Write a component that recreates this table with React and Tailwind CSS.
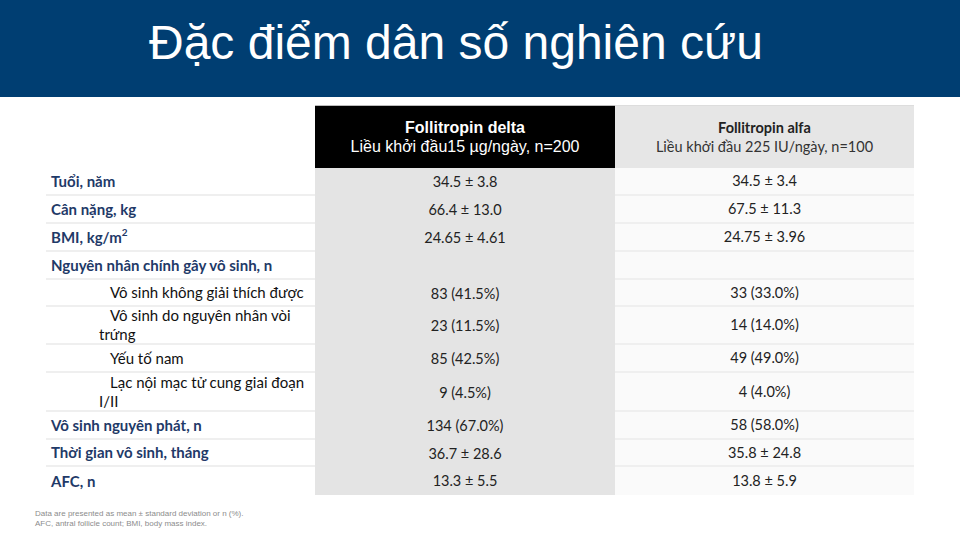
import React from "react";

const rows = [
  {label: "Tuổi, năm", a: "34.5 ± 3.8", b: "34.5 ± 3.4", h: "h-[28px]"},
  {label: "Cân nặng, kg", a: "66.4 ± 13.0", b: "67.5 ± 11.3", h: "h-[28px]"},
  {label: "BMI", a: "24.65 ± 4.61", b: "24.75 ± 3.96", h: "h-[28px]", bmi: true},
  {label: "Nguyên nhân chính gây vô sinh, n", a: "", b: "", h: "h-[28px]"},
  {sub: ["Vô sinh không giải thích được"], a: "83 (41.5%)", b: "33 (33.0%)", h: "h-[27px]"},
  {sub: ["Vô sinh do nguyên nhân vòi", "trứng"], a: "23 (11.5%)", b: "14 (14.0%)", h: "h-[38px]"},
  {sub: ["Yếu tố nam"], a: "85 (42.5%)", b: "49 (49.0%)", h: "h-[28px]"},
  {sub: ["Lạc nội mạc tử cung giai đoạn", "I/II"], a: "9 (4.5%)", b: "4 (4.0%)", h: "h-[39px]"},
  {label: "Vô sinh nguyên phát, n", a: "134 (67.0%)", b: "58 (58.0%)", h: "h-[28px]"},
  {label: "Thời gian vô sinh, tháng", a: "36.7 ± 28.6", b: "35.8 ± 24.8", h: "h-[27px]"},
  {label: "AFC, n", a: "13.3 ± 5.5", b: "13.8 ± 5.9", h: "h-[28px]", last: true},
];

const Row = ({r}) => {
  const line = r.last ? "" : "border-b-2 border-[#efefef]";
  return (
    <>
      <div className={`${r.h} ${line} bg-white flex items-center`}>
        {r.sub ? (
          <div className="pl-[53px] text-[15px] leading-[19px] text-[#111] whitespace-nowrap">
            <span className="pl-[11px]">{r.sub[0]}</span>
            {r.sub[1] && (
              <>
                <br />
                {r.sub[1]}
              </>
            )}
          </div>
        ) : (
          <div className="pl-[5px] text-[15px] font-bold text-[#1f3a68] whitespace-nowrap">
            {r.bmi ? (
              <>
                BMI, kg/m<span className="text-[10px] align-top relative -top-[1px]">2</span>
              </>
            ) : (
              r.label
            )}
          </div>
        )}
      </div>
      <div className={`${r.h} bg-[#e4e4e4] flex items-center justify-center text-[14.5px] text-[#222]`}>
        {r.a}
      </div>
      <div className={`${r.h} ${line} bg-[#fafafa] flex items-center justify-center text-[14.5px] text-[#222]`}>
        {r.b}
      </div>
    </>
  );
};

export default function App() {
  return (
    <div className="w-[960px] h-[540px] bg-white relative overflow-hidden font-['Lato',sans-serif]">
      <div className="h-[97px] bg-[#003e72] pl-[149px] pt-[19px]">
        <h1 className="text-white text-[48px] leading-[48px] font-['Liberation_Sans',Arial,sans-serif]">
          Đặc điểm dân số nghiên cứu
        </h1>
      </div>

      <div className="ml-[46px] mt-[8px] grid grid-cols-[269px_300px_299px]">
        <div className="h-[63px] bg-white"></div>
        <div className="h-[63px] bg-black border-t border-[#bbb] flex flex-col items-center justify-center text-white font-['Liberation_Sans',Arial,sans-serif]">
          <div className="text-[16px] font-bold leading-[19px]">Follitropin delta</div>
          <div className="text-[16px] leading-[19px]">Liều khởi đầu15 µg/ngày, n=200</div>
        </div>
        <div className="h-[63px] bg-[#e6e6e6] border-t border-[#ddd] flex flex-col items-center justify-center text-[#222]">
          <div className="text-[14.5px] font-bold leading-[19px]">Follitropin alfa</div>
          <div className="text-[14.5px] leading-[19px] text-[#333]">Liều khởi đầu 225 IU/ngày, n=100</div>
        </div>
        {rows.map((r, i) => (
          <Row key={i} r={r} />
        ))}
      </div>

      <div className="ml-[35px] mt-[14px] text-[8px] leading-[10px] text-[#8c8c8c] font-['Liberation_Sans',Arial,sans-serif]">
        <div>Data are presented as mean ± standard deviation or n (%).</div>
        <div>AFC, antral follicle count; BMI, body mass index.</div>
      </div>
    </div>
  );
}
